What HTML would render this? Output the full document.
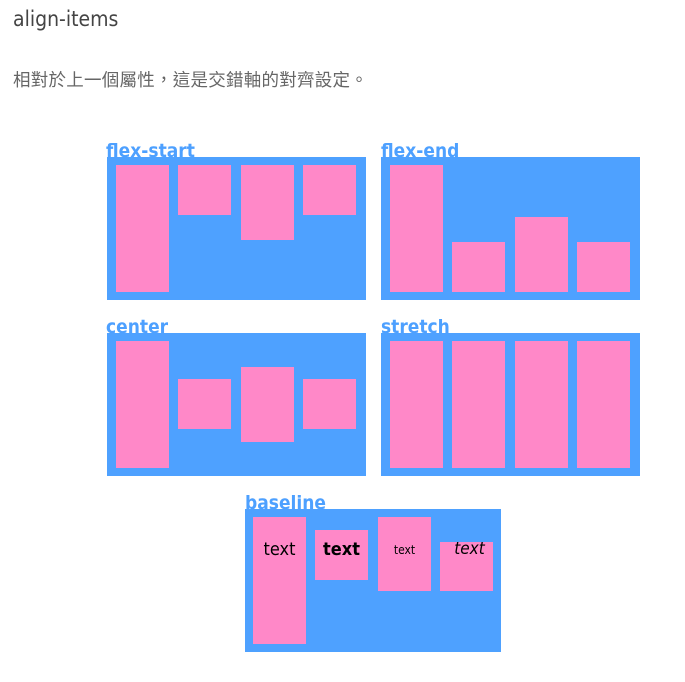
<!DOCTYPE html>
<html><head><meta charset="utf-8"><style>
body{margin:0;width:685px;height:682px;background:#fff;position:relative;overflow:hidden;font-family:"Liberation Sans","Noto Sans CJK TC",sans-serif}
h1{position:absolute;left:13px;top:7px;margin:0;font-size:21px;color:#444;font-family:"DejaVu Sans Condensed","Liberation Sans",sans-serif;font-weight:normal}
p{position:absolute;left:13px;top:67px;margin:0;font-size:17.5px;color:#666;letter-spacing:0.25px}
.lbl{position:absolute;color:#4da0ff;font-weight:bold;font-size:19px;line-height:20px;font-family:"DejaVu Sans Condensed","Liberation Sans",sans-serif}
.box{position:absolute;background:#4ea1ff;width:259px;height:143px}
.it{position:absolute;background:#ff88c8;width:53px}
.t{position:absolute;left:0;width:53px;text-align:center;color:#000;font-family:"DejaVu Sans Condensed","Liberation Sans",sans-serif}
</style></head><body>
<h1>align-items</h1>
<p>相對於上一個屬性，這是交錯軸的對齊設定。</p>

<div class="lbl" style="left:106px;top:141px">flex-start</div>
<div class="box" style="left:107px;top:157px"></div>
<div class="it" style="left:116px;top:165px;height:127px"></div>
<div class="it" style="left:178px;top:165px;height:50px"></div>
<div class="it" style="left:241px;top:165px;height:75px"></div>
<div class="it" style="left:303px;top:165px;height:50px"></div>

<div class="lbl" style="left:381px;top:141px">flex-end</div>
<div class="box" style="left:381px;top:157px"></div>
<div class="it" style="left:390px;top:165px;height:127px"></div>
<div class="it" style="left:452px;top:242px;height:50px"></div>
<div class="it" style="left:515px;top:217px;height:75px"></div>
<div class="it" style="left:577px;top:242px;height:50px"></div>

<div class="lbl" style="left:106px;top:317px">center</div>
<div class="box" style="left:107px;top:333px"></div>
<div class="it" style="left:116px;top:341px;height:127px"></div>
<div class="it" style="left:178px;top:379px;height:50px"></div>
<div class="it" style="left:241px;top:367px;height:75px"></div>
<div class="it" style="left:303px;top:379px;height:50px"></div>

<div class="lbl" style="left:381px;top:317px">stretch</div>
<div class="box" style="left:381px;top:333px"></div>
<div class="it" style="left:390px;top:341px;height:127px"></div>
<div class="it" style="left:452px;top:341px;height:127px"></div>
<div class="it" style="left:515px;top:341px;height:127px"></div>
<div class="it" style="left:577px;top:341px;height:127px"></div>

<div class="lbl" style="left:245px;top:493px">baseline</div>
<div class="box" style="left:245px;top:509px;width:256px"></div>
<div class="it" style="left:253px;top:517px;height:127px"><div class="t" style="top:22px;font-size:18px">text</div></div>
<div class="it" style="left:315px;top:530px;height:50px"><div class="t" style="top:9px;font-size:18px;font-weight:bold">text</div></div>
<div class="it" style="left:378px;top:517px;height:74px"><div class="t" style="top:26px;font-size:12px">text</div></div>
<div class="it" style="left:440px;top:542px;height:49px"><div class="t" style="top:-3px;font-size:17px;font-style:italic;left:3px">text</div></div>
</body></html>
